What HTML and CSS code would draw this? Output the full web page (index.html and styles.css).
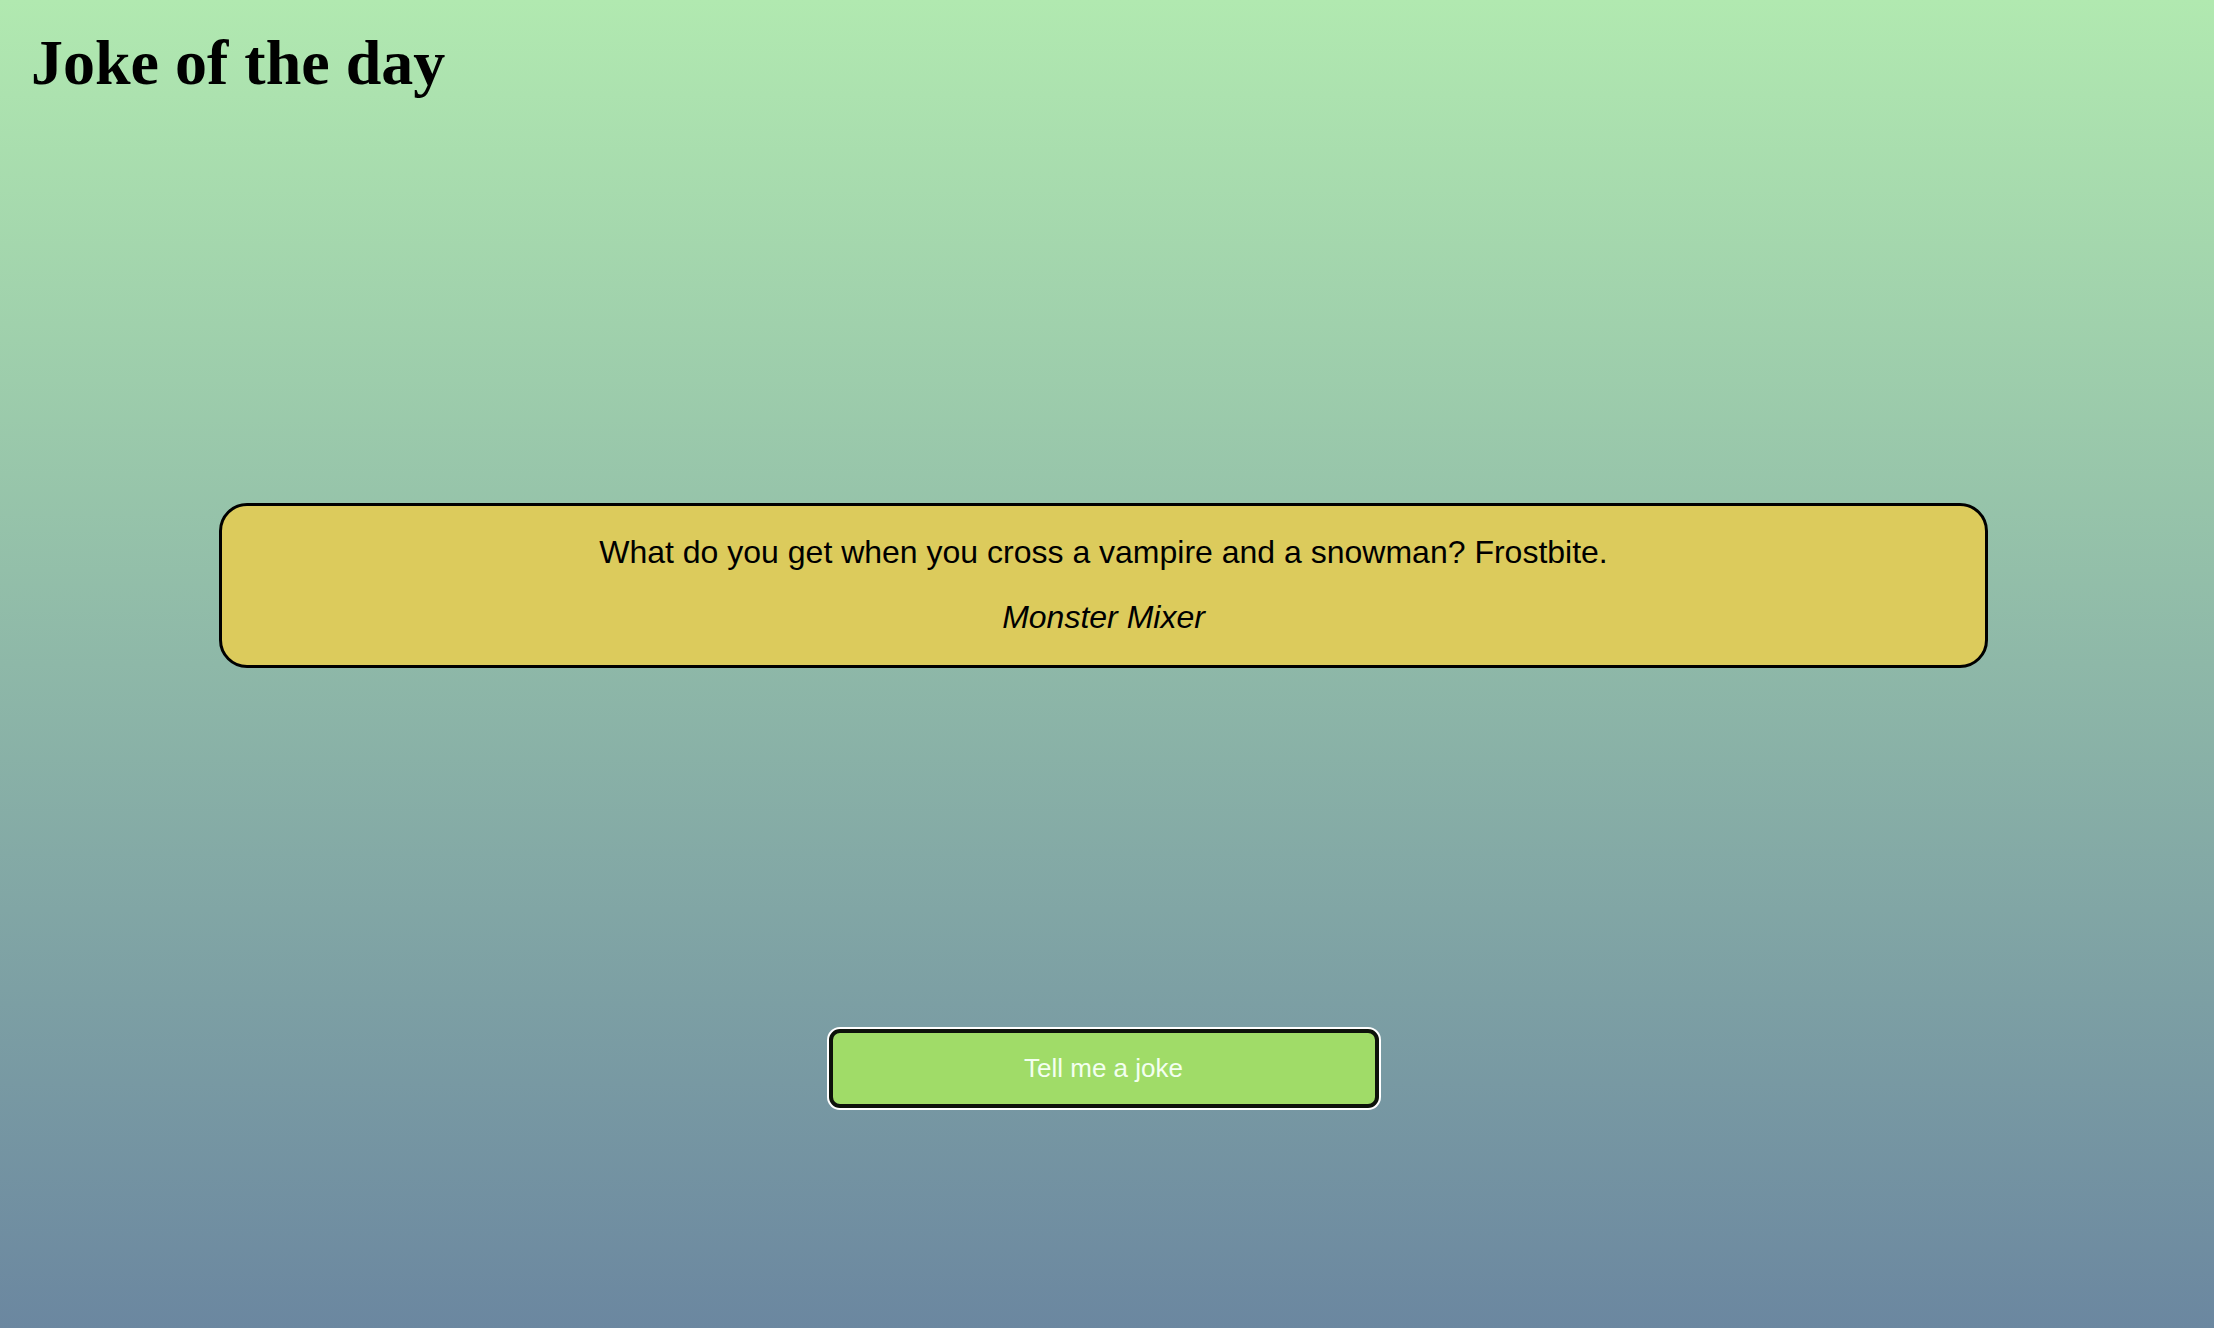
FILE: index.html
```html
<!DOCTYPE html>
<html lang="en">
<head>
<meta charset="utf-8">
<title>Joke of the day</title>
<link rel="stylesheet" href="styles.css">
</head>
<body>
<div class="page">
  <h1 class="title">Joke of the day</h1>
  <section class="card">
    <p class="joke">What do you get when you cross a vampire and a snowman? Frostbite.</p>
    <p class="author">Monster Mixer</p>
  </section>
  <div class="actions">
    <button class="joke-btn" type="button">Tell me a joke</button>
  </div>
</div>
</body>
</html>
```
FILE: styles.css
```css
html, body {
  margin: 0;
  padding: 0;
}
body {
  min-height: 100vh;
  background: linear-gradient(to bottom, #b1e9b0 0%, #6b87a0 100%);
  background-attachment: fixed;
}
.page {
  width: 2207px;
  display: flex;
  flex-direction: column;
}
.title {
  margin: 0;
  padding: 26px 0 0 31px;
  font-family: "Liberation Serif", "Times New Roman", serif;
  font-size: 64px;
  font-weight: bold;
  line-height: 73px;
  color: #000;
}
.card {
  box-sizing: border-box;
  width: 1769px;
  margin: 404px auto 0;
  padding: 28px 0 29px;
  background: #dccb5c;
  border: 3px solid #000;
  border-radius: 28px;
  display: flex;
  flex-direction: column;
  gap: 28px;
  text-align: center;
  font-family: "Liberation Sans", Arial, sans-serif;
  font-size: 32px;
  color: #000;
}
.card p {
  margin: 0;
  line-height: 37px;
}
.author {
  font-style: italic;
}
.actions {
  display: flex;
  justify-content: center;
  margin-top: 361px;
}
.joke-btn {
  box-sizing: border-box;
  width: 550px;
  height: 79px;
  background: #a0dc68;
  border: 4px solid #0d120b;
  border-radius: 11px;
  box-shadow: 0 0 0 2px #ffffff;
  color: #f3fff0;
  font-family: "Liberation Sans", Arial, sans-serif;
  font-size: 26px;
  padding: 0;
  cursor: pointer;
}
```
